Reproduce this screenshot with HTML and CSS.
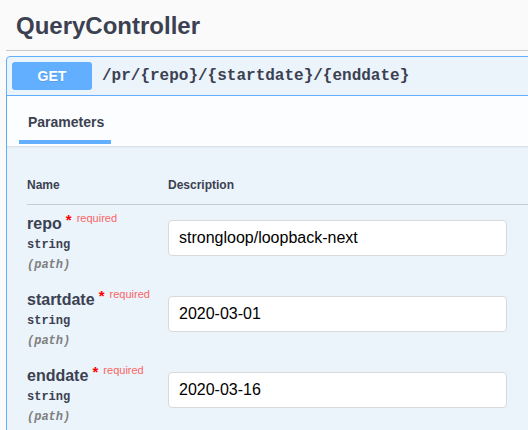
FILE: index.html
```html
<!DOCTYPE html>
<html>
<head>
<meta charset="utf-8">
<link rel="stylesheet" href="styles.css">
</head>
<body>
<div class="page">
  <h3 class="tag">QueryController</h3>
  <div class="opblock">
    <div class="summary">
      <span class="method">GET</span>
      <span class="path">/pr/{repo}/{startdate}/{enddate}</span>
    </div>
    <div class="tab-header">
      <div class="tab">Parameters</div>
    </div>
    <div class="params">
      <div class="thead">
        <div class="col-name">Name</div>
        <div class="col-desc">Description</div>
      </div>
      <div class="row">
        <div class="col-name">
          <div class="pname">repo<span class="star">&nbsp;*</span><span class="req">required</span></div>
          <div class="ptype">string</div>
          <div class="pin">(path)</div>
        </div>
        <div class="col-desc"><div class="input">strongloop/loopback-next</div></div>
      </div>
      <div class="row">
        <div class="col-name">
          <div class="pname">startdate<span class="star">&nbsp;*</span><span class="req">required</span></div>
          <div class="ptype">string</div>
          <div class="pin">(path)</div>
        </div>
        <div class="col-desc"><div class="input">2020-03-01</div></div>
      </div>
      <div class="row">
        <div class="col-name">
          <div class="pname">enddate<span class="star">&nbsp;*</span><span class="req">required</span></div>
          <div class="ptype">string</div>
          <div class="pin">(path)</div>
        </div>
        <div class="col-desc"><div class="input">2020-03-16</div></div>
      </div>
    </div>
  </div>
</div>
</body>
</html>
```
FILE: styles.css
```css
html, body {
  margin: 0;
  padding: 0;
  background: #fafafa;
  overflow: hidden;
  height: 430px;
}
body {
  font-family: "Liberation Sans", Arial, sans-serif;
  color: #3b4151;
}
.page {
  width: 580px;
  padding-left: 6px;
}
.tag {
  margin: 0;
  height: 51px;
  box-sizing: border-box;
  padding: 11px 0 0 10px;
  font-size: 24px;
  line-height: 30px;
  font-weight: bold;
  border-bottom: 1px solid #c8c9cc;
}
.opblock {
  margin-top: 5px;
  border: 1px solid #61affe;
  border-radius: 4px;
  background: #ebf3fb;
  height: 420px;
}
.summary {
  display: flex;
  align-items: center;
  padding: 5px;
  height: 28px;
  border-bottom: 1px solid #61affe;
}
.method {
  width: 80px;
  height: 28px;
  line-height: 28px;
  text-align: center;
  background: #61affe;
  color: #fff;
  font-weight: bold;
  font-size: 14px;
  border-radius: 3px;
  margin-right: 10px;
  text-shadow: 0 1px 0 rgba(0,0,0,.1);
}
.path {
  font-family: "Liberation Mono", "Courier New", monospace;
  font-weight: bold;
  font-size: 16px;
}
.tab-header {
  height: 50px;
  background: #fcfdfe;
  box-shadow: 0 1px 2px rgba(0,0,0,.1);
  padding-left: 12px;
  display: flex;
  align-items: flex-end;
}
.tab {
  width: 92px;
  box-sizing: border-box;
  padding-left: 9px;
  font-size: 14px;
  font-weight: bold;
  line-height: 18px;
  padding-bottom: 9px;
  border-bottom: 4px solid #61affe;
  margin-bottom: 2px;
}
.params {
  padding: 0 0 0 20px;
}
.thead {
  display: flex;
  padding-top: 29px;
  height: 29px;
  border-bottom: 1px solid #c6ccd6;
  font-size: 12px;
  font-weight: bold;
  line-height: 20px;
}
.col-name {
  width: 141px;
  flex: none;
}
.col-desc {
  flex: 1;
}
.row {
  display: flex;
  height: 76px;
}
.row .col-name {
  padding-top: 9px;
}
.row .col-desc {
  padding-top: 15px;
}
.pname {
  font-size: 16px;
  font-weight: bold;
  line-height: 20px;
}
.star {
  color: #f00;
  font-size: 15px;
  position: relative;
  top: -4px;
}
.req {
  color: #f96666;
  font-size: 11px;
  font-weight: normal;
  position: relative;
  top: -7px;
  padding-left: 5px;
}
.ptype {
  font-family: "Liberation Mono", "Courier New", monospace;
  font-size: 12px;
  font-weight: bold;
  line-height: 20px;
}
.pin {
  font-family: "Liberation Mono", "Courier New", monospace;
  font-size: 12px;
  font-weight: bold;
  font-style: italic;
  color: #808080;
  line-height: 20px;
}
.input {
  width: 339px;
  height: 36px;
  box-sizing: border-box;
  background: #fff;
  border: 1px solid #d9d9d9;
  border-radius: 4px;
  padding: 0 10px;
  font-size: 16px;
  line-height: 34px;
  color: #000;
}
```
